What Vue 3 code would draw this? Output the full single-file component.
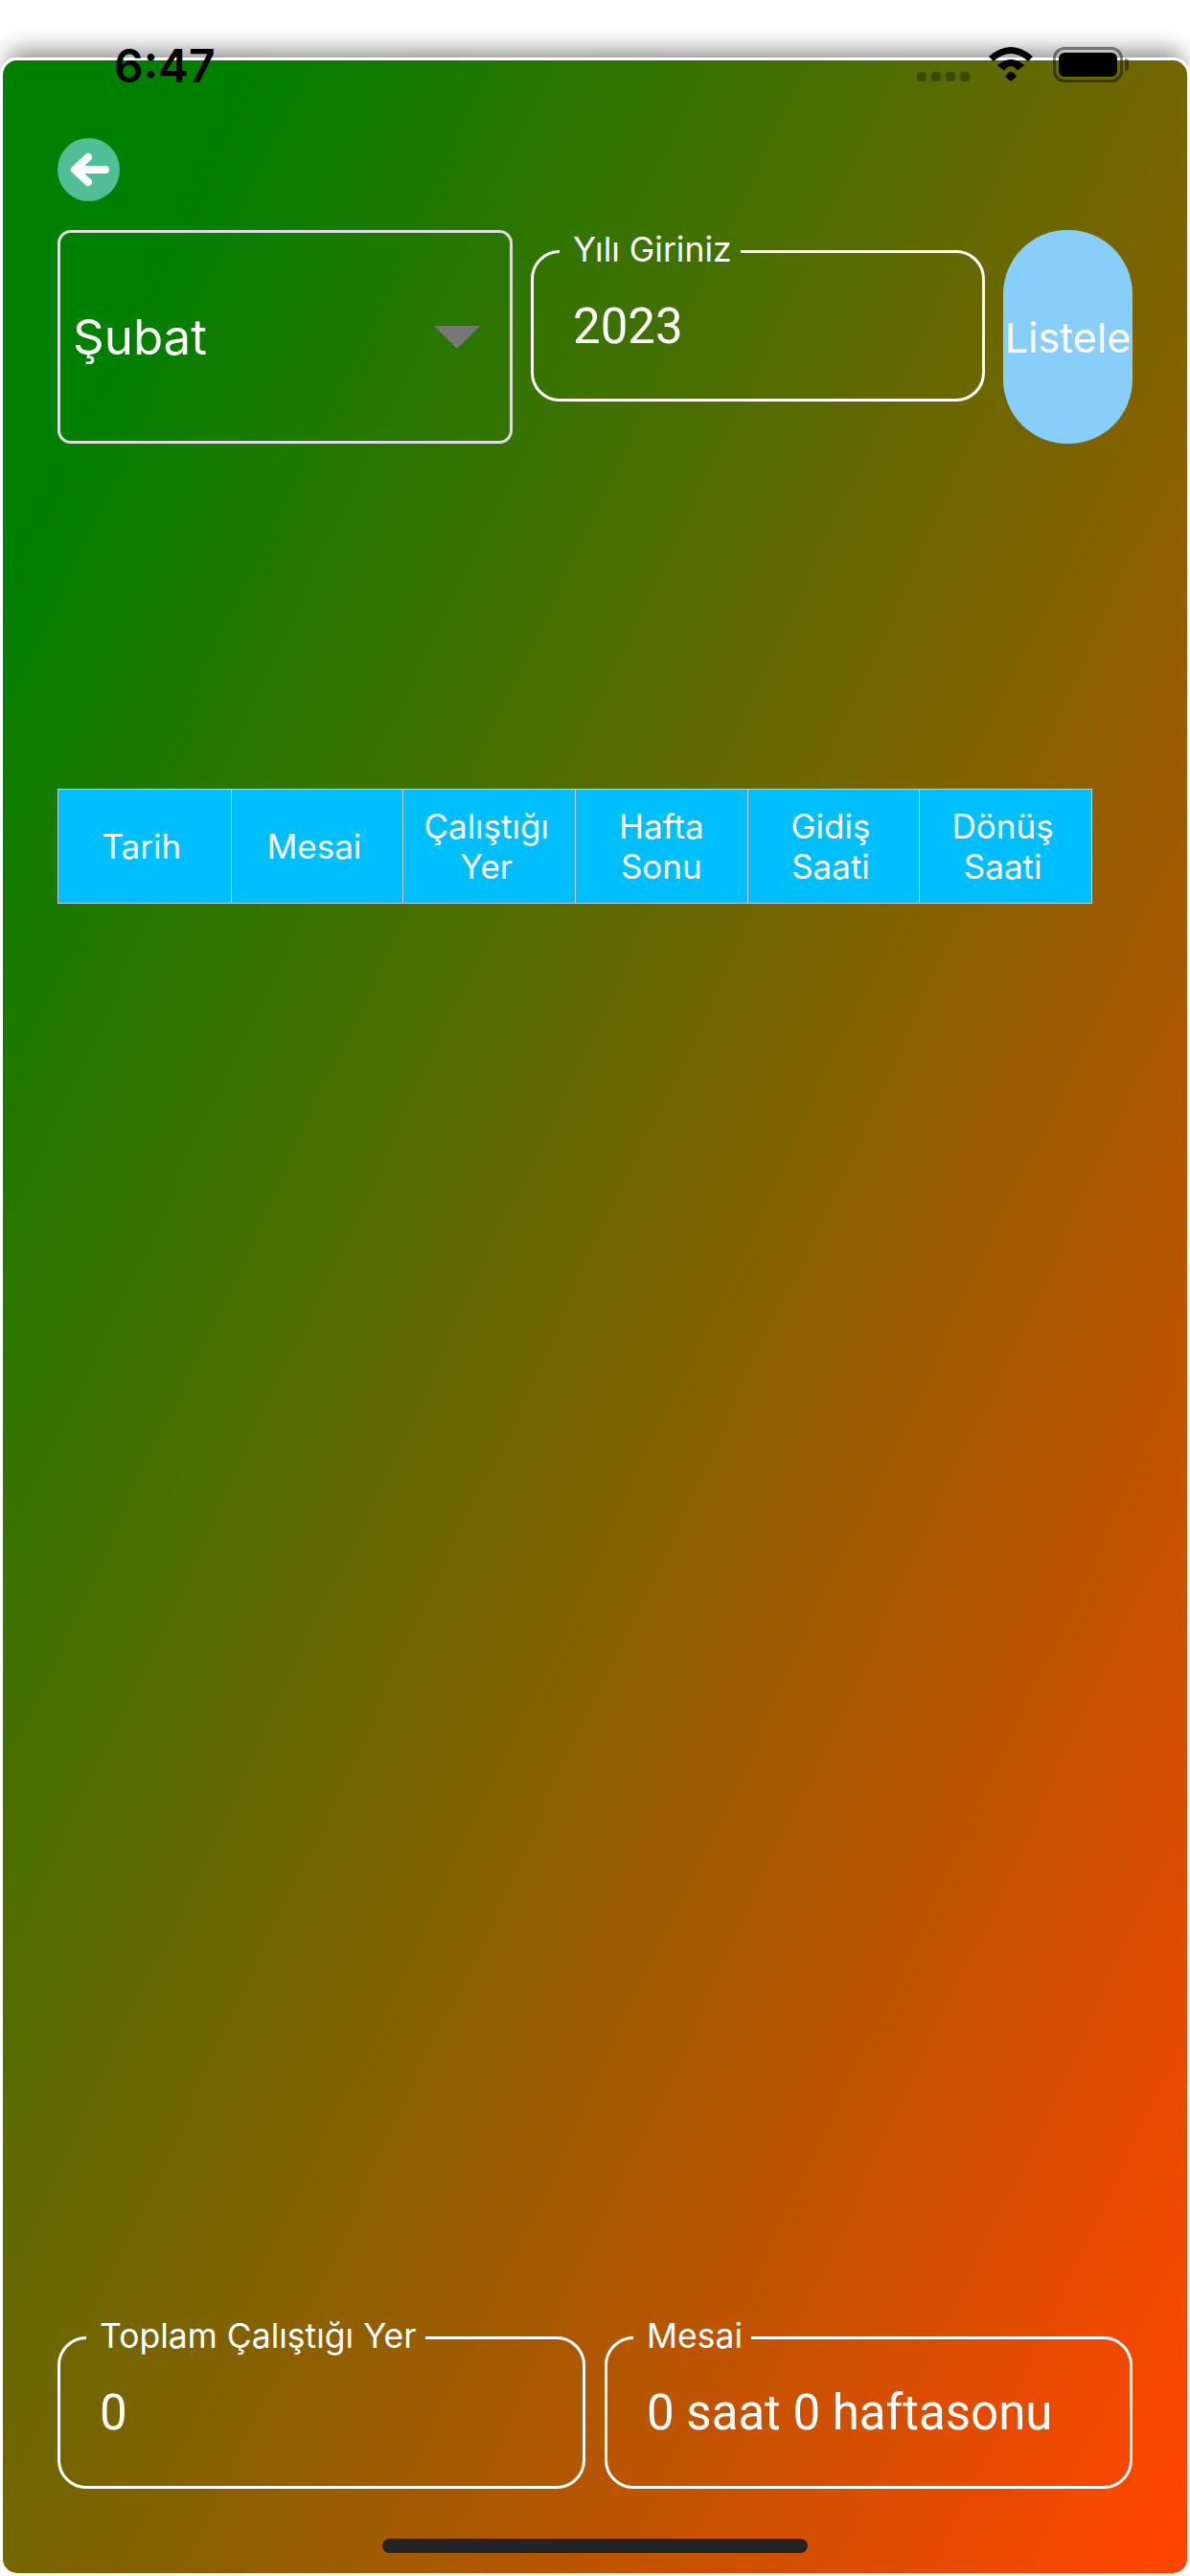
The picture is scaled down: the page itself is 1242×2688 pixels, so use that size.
<script setup>
const headers = [
  ['Tarih'],
  ['Mesai'],
  ['Çalıştığı', 'Yer'],
  ['Hafta', 'Sonu'],
  ['Gidiş', 'Saati'],
  ['Dönüş', 'Saati'],
]
</script>

<template>
  <div class="page">
    <div class="card">
      <button class="back" aria-label="Geri">
        <svg width="65" height="66" viewBox="0 0 65 66">
          <path d="M50 33H19M32 20L18 33L32 46" fill="none" stroke="#fff" stroke-width="8" stroke-linecap="round" stroke-linejoin="round" />
        </svg>
      </button>

      <div class="filters">
        <div class="select">
          <span>Şubat</span>
          <i class="caret"></i>
        </div>
        <fieldset class="field year">
          <legend>Yılı Giriniz</legend>
          <div class="value">2023</div>
        </fieldset>
        <button class="list-btn">Listele</button>
      </div>

      <div class="table">
        <div v-for="(h, i) in headers" :key="i" class="th">
          <span v-for="line in h" :key="line">{{ line }}</span>
        </div>
      </div>

      <div class="totals">
        <fieldset class="field total">
          <legend>Toplam Çalıştığı Yer</legend>
          <div class="value">0</div>
        </fieldset>
        <fieldset class="field total">
          <legend>Mesai</legend>
          <div class="value">0 saat 0 haftasonu</div>
        </fieldset>
      </div>
    </div>

    <div class="status">
      <span class="time">6:47</span>
      <div class="dots"><i></i><i></i><i></i><i></i></div>
      <svg class="wifi" width="46" height="36" viewBox="0 0 46 36">
        <path d="M0 10Q23-10 46 10L41 15Q23-1 5 15Z" />
        <path d="M8.7 19Q23 7 37.3 19L30 24.5Q23 15.5 16 24.5Z" />
        <path d="M17 31Q23 21 29 31L23 36Z" />
      </svg>
      <div class="battery"><b></b></div>
      <i class="nub"></i>
    </div>

    <div class="home"></div>
  </div>
</template>

<style>
html, body {
  margin: 0;
  background: #fff;
}
</style>

<style scoped>
.page {
  position: relative;
  width: 1242px;
  height: 2688px;
  box-sizing: border-box;
  padding-top: 60px;
  overflow: hidden;
  background: #fff;
  font-family: Inter, "Liberation Sans", sans-serif;
  color: #fff;
}
.card {
  box-sizing: border-box;
  width: 100%;
  height: 100%;
  display: flex;
  flex-direction: column;
  padding: 81px 57px 88px;
  border: 3px solid #fff;
  border-radius: 18px;
  background: linear-gradient(to bottom right, #008000 10%, #ff4500 98%);
  box-shadow: 0 -16px 22px -8px rgba(0, 0, 0, 0.42);
}
.back {
  width: 65px;
  height: 66px;
  padding: 0;
  border: 0;
  border-radius: 50%;
  background: #50bf98;
  display: block;
}
.back svg {
  display: block;
}
.filters {
  display: flex;
  align-items: flex-start;
  margin-top: 30px;
}
.select {
  box-sizing: border-box;
  width: 475px;
  height: 223px;
  display: flex;
  align-items: center;
  justify-content: space-between;
  padding: 0 31px 0 13px;
  border: 3px solid #ddd;
  border-radius: 14px;
  font-size: 51px;
}
.caret {
  width: 0;
  height: 0;
  border-left: 24px solid transparent;
  border-right: 24px solid transparent;
  border-top: 24px solid #777;
}
.field {
  box-sizing: border-box;
  min-width: 0;
  margin: 0;
  padding: 0;
  border: 3px solid #fff;
  border-radius: 30px;
}
.field legend {
  padding: 0 9px 4px 14px;
  margin-left: 27px;
  font-size: 35.5px;
  line-height: 39px;
}
.value {
  font-family: Roboto, "Liberation Sans", sans-serif;
  font-size: 51px;
  line-height: 60px;
  margin-top: 27px;
  padding-left: 41px;
}
.year {
  width: 474px;
  height: 178px;
  margin: 1px 19px 0 19px;
}
.list-btn {
  width: 135px;
  height: 223px;
  padding: 0;
  border: 0;
  border-radius: 67px;
  background: #87cefa;
  color: #fff;
  font-family: inherit;
  font-size: 43px;
  white-space: nowrap;
  overflow: visible;
}
.table {
  display: grid;
  grid-template-columns: repeat(6, 1fr);
  width: 1080px;
  height: 120px;
  margin-top: 360px;
  box-sizing: border-box;
  background: #00bfff;
  border: 1px solid #ccc;
}
.th {
  display: flex;
  flex-direction: column;
  align-items: center;
  justify-content: center;
  box-sizing: border-box;
  padding-right: 6px;
  font-size: 35px;
  line-height: 42px;
  border-left: 1px solid #ccc;
}
.th:first-child {
  border-left: 0;
}
.th:nth-child(4) {
  padding-right: 0;
}
.totals {
  display: flex;
  gap: 20px;
  margin-top: auto;
}
.total {
  flex: 1 1 0;
  height: 179px;
}
.status {
  position: absolute;
  top: 0;
  left: 0;
  width: 100%;
  height: 90px;
  color: #000;
}
.time {
  position: absolute;
  left: 119px;
  top: 40px;
  font-size: 48px;
  line-height: 58px;
  font-weight: 600;
}
.dots {
  position: absolute;
  left: 957px;
  top: 75px;
  display: flex;
  gap: 5px;
}
.dots i {
  width: 10px;
  height: 10px;
  border-radius: 3px;
  background: rgba(0, 0, 0, 0.3);
}
.wifi {
  position: absolute;
  left: 1032px;
  top: 49px;
  fill: #000;
}
.battery {
  position: absolute;
  left: 1099px;
  top: 49px;
  box-sizing: border-box;
  width: 73px;
  height: 37px;
  padding: 3px;
  border: 3px solid rgba(0, 0, 0, 0.45);
  border-radius: 12px;
}
.battery b {
  display: block;
  width: 100%;
  height: 100%;
  border-radius: 6px;
  background: #000;
}
.nub {
  position: absolute;
  left: 1174px;
  top: 61px;
  width: 4px;
  height: 13px;
  border-radius: 0 4px 4px 0;
  background: rgba(0, 0, 0, 0.45);
}
.home {
  position: absolute;
  left: 399px;
  top: 2649px;
  width: 444px;
  height: 15px;
  border-radius: 8px;
  background: #232323;
}
</style>
